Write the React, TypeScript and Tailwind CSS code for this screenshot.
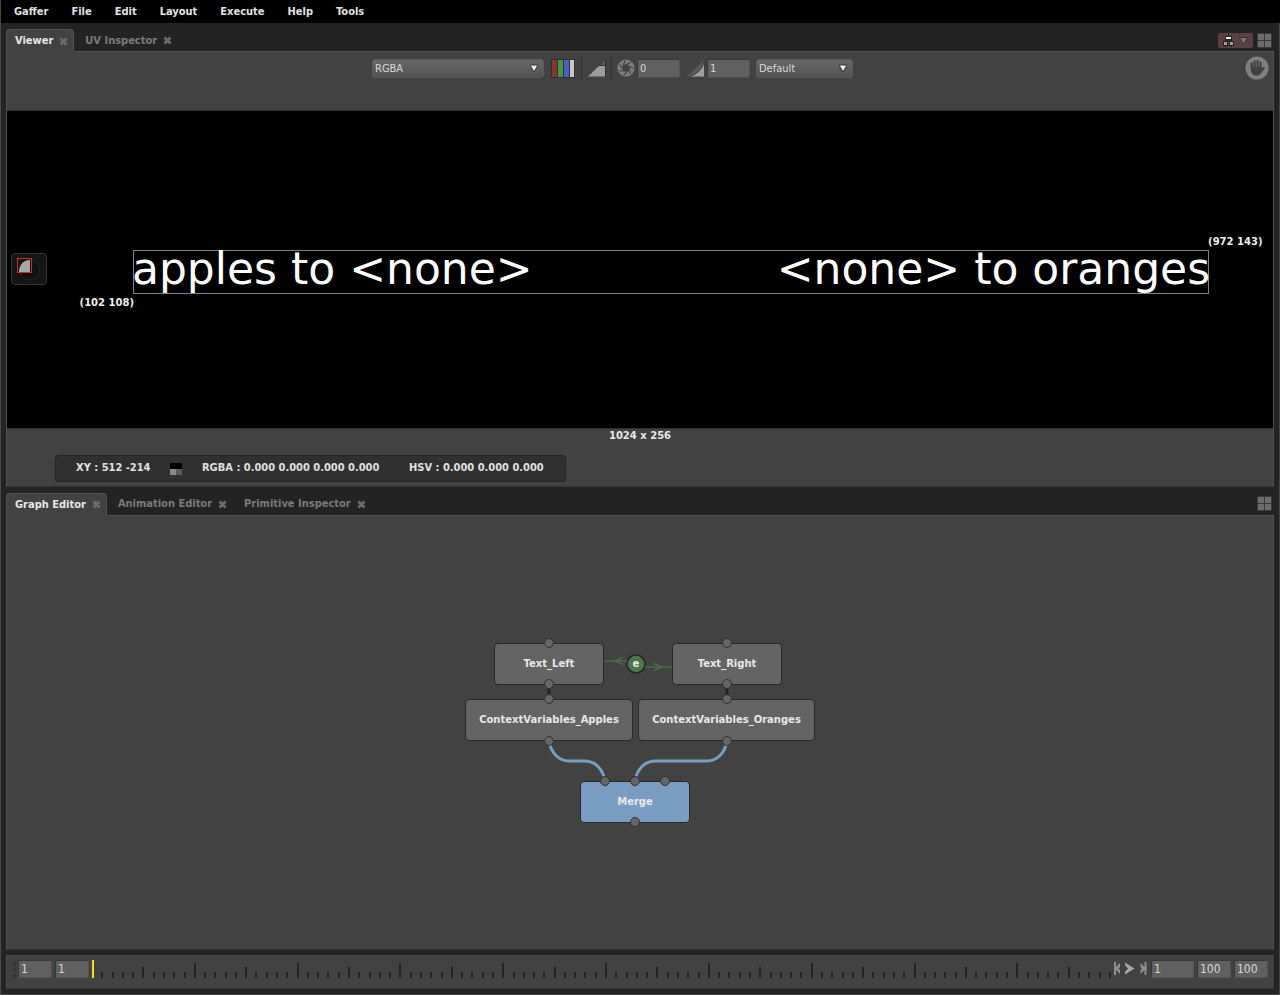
import React from 'react';

const MENUS = ['Gaffer', 'File', 'Edit', 'Layout', 'Execute', 'Help', 'Tools'];

function CloseIcon() {
  return (
    <svg width="9" height="9" viewBox="0 0 9 9" aria-hidden="true">
      <path d="M1.5 1.5 7.5 7.5M7.5 1.5 1.5 7.5" stroke="#6c6c6c" strokeWidth="2.8" />
    </svg>
  );
}

function GridIcon() {
  return (
    <svg width="15" height="15" viewBox="0 0 15 15" aria-hidden="true">
      <rect width="15" height="15" rx="1" fill="#3a3a3a" />
      <path d="M1 1h6v6H1zM8 1h6v6H8zM1 8h6v6H1zM8 8h6v6H8z" fill="#6c6c6c" />
    </svg>
  );
}

function NodeSetIcon() {
  return (
    <svg width="35" height="15" viewBox="0 0 35 15" aria-hidden="true">
      <rect width="35" height="15" rx="2" fill="#5c3f43" />
      <path d="M10.5 1v7M7.5 14V7.500h6V14" stroke="#252525" fill="none" />
      <rect x="7" y="3" width="7" height="4" fill="#222" />
      <rect x="8" y="4" width="5" height="2" fill="#f2f2f2" />
      <rect x="5" y="8" width="5" height="5" fill="#222" />
      <rect x="11" y="8" width="5" height="5" fill="#222" />
      <rect x="6" y="9" width="3" height="3" fill="#a2a2a2" />
      <rect x="12" y="9" width="3" height="3" fill="#a2a2a2" />
      <path d="M21.500 4.500h8l-4 7z" fill="#777" stroke="#3c2c2e" />
    </svg>
  );
}

function HandIcon() {
  return (
    <svg width="24" height="24" viewBox="0 0 24 24" aria-hidden="true">
      <circle cx="12" cy="12" r="11.500" fill="#808080" />
      <path
        d="M6.700 12V7.300M9.600 12V5.400M12.600 12V5M15.500 12V6.500M16 15.500l2.700-3.500"
        fill="none"
        stroke="#414141"
        strokeWidth="2.200"
        strokeLinecap="round"
      />
      <path d="M5.600 11h11v3l1.500-1-2.500 4.500c-.8 1.200-1.200 1.800-2.600 2H9c-2.200-1.500-3.400-4.500-3.400-8.500z" fill="#414141" />
    </svg>
  );
}

function ChannelsIcon() {
  return (
    <svg width="24" height="19" viewBox="0 0 24 19" aria-hidden="true">
      <rect width="24" height="19" fill="#303030" />
      <rect x="1" y="1" width="5" height="17" fill="#843633" />
      <rect x="7" y="1" width="5" height="17" fill="#459843" />
      <rect x="13" y="1" width="5" height="17" fill="#4b60c0" />
      <rect x="19" y="1" width="4" height="17" fill="#c9c9cb" />
    </svg>
  );
}

function ClippingIcon() {
  return (
    <svg width="18" height="18" viewBox="0 0 18 18" aria-hidden="true">
      <path d="M0 17.500 11 7h6.500v10.500z" fill="#9c9c9c" />
      <path d="M12 6.500 17.500 1v5.500z" fill="#5b5b5b" />
      <path d="M17.500 0v18M11 6.500h6" stroke="#303030" />
    </svg>
  );
}

function ExposureIcon() {
  const blades = [0, 51.4, 102.8, 154.3, 205.7, 257.1, 308.6];
  return (
    <svg width="18" height="18" viewBox="0 0 18 18" aria-hidden="true">
      <circle cx="9" cy="9" r="5.800" fill="none" stroke="#7d7d7d" strokeWidth="5.600" />
      {blades.map((a) => (
        <path key={a} d="M7 6.500 14 3.500" stroke="#3b3b3b" strokeWidth="1" transform={`rotate(${a} 9 9)`} />
      ))}
    </svg>
  );
}

function GammaIcon() {
  return (
    <svg width="18" height="18" viewBox="0 0 18 18" aria-hidden="true">
      <path d="M0 17.500 17 1v16.500z" fill="#5b5b5b" />
      <path d="M2 17.500C9.500 16 15.500 10 17 3v14.500z" fill="#9f9f9f" />
      <path d="M2 17.500C9.500 16 15.500 10 17 3" fill="none" stroke="#383838" />
    </svg>
  );
}

function DropDown({ label, value, width }: { label: string; value: string; width: string }) {
  return (
    <div className={`relative ${width}`}>
      <select
        aria-label={label}
        defaultValue={value}
        className="block h-[19px] w-full appearance-none rounded-[3px] border border-[#5b5b5b] bg-linear-to-b from-[#696969] to-[#515151] pt-px pl-[2px] text-[11px] leading-4 text-[#d8d8d8]"
      >
        <option>{value}</option>
      </select>
      <svg className="pointer-events-none absolute top-[5px] right-[5px]" width="10" height="9" viewBox="0 0 10 9" aria-hidden="true">
        <path d="M1 1h8L5 8z" fill="#eee" stroke="#333" />
      </svg>
    </div>
  );
}

function Field({ label, value, className }: { label: string; value: string; className: string }) {
  return (
    <input
      aria-label={label}
      defaultValue={value}
      className={`min-w-0 rounded-[2px] border border-t-[#373737] border-r-[#525252] border-b-[#525252] border-l-[#373737] bg-[#606060] text-[#d8d8d8] outline-none ${className}`}
    />
  );
}

function TabStrip({ tabs, children }: { tabs: string[]; children: React.ReactNode }) {
  return (
    <div className="flex h-[22px] items-stretch">
      <div role="tablist" className="flex">
        {tabs.map((t, i) => (
          <div
            key={t}
            className={
              i === 0
                ? 'relative z-10 -mb-px flex items-center gap-[6px] rounded-t-[4px] border border-b-0 border-[#505050] bg-[#424242] pr-[5px] pl-2'
                : 'flex items-center gap-[6px] pt-px pr-[6px] pl-[11px]'
            }
          >
            <button
              role="tab"
              aria-selected={i === 0}
              className={i === 0 ? 'text-[11px] leading-4 font-bold text-[#e6e6e6]' : 'text-[11px] leading-4 font-bold text-[#7b7b7b]'}
            >
              {t}
            </button>
            <button aria-label={`Close ${t}`}>
              <CloseIcon />
            </button>
          </div>
        ))}
      </div>
      <div className="ml-auto flex items-center gap-1 pr-[2px]">{children}</div>
    </div>
  );
}

function Viewer() {
  return (
    <section className="flex flex-col">
      <TabStrip tabs={['Viewer', 'UV Inspector']}>
        <button aria-label="Node set">
          <NodeSetIcon />
        </button>
        <button aria-label="Viewer layout">
          <GridIcon />
        </button>
      </TabStrip>
      <div className="border border-[#4f4f4f] border-b-[#343434] bg-[#424242]">
        <div className="flex h-[59px] items-start border-b border-[#303030] pt-[4px]">
          <div className="flex h-6 flex-1 items-center justify-center">
            <DropDown label="Channels" value="RGBA" width="w-[172px]" />
            <button aria-label="Solo channel" className="ml-[7px]">
              <ChannelsIcon />
            </button>
            <div className="mx-[6px] h-6 w-px bg-[#343434]" />
            <button aria-label="Clipping">
              <ClippingIcon />
            </button>
            <div className="mx-[5px] h-6 w-px bg-[#343434]" />
            <button aria-label="Reset exposure">
              <ExposureIcon />
            </button>
            <Field label="Exposure" value="0" className="ml-[2px] h-[19px] w-[43px] pl-[2px] text-[11px]" />
            <button aria-label="Reset gamma" className="ml-[7px]">
              <GammaIcon />
            </button>
            <Field label="Gamma" value="1" className="ml-[2px] h-[19px] w-[43px] pl-[2px] text-[11px]" />
            <div className="ml-[6px]">
              <DropDown label="Display transform" value="Default" width="w-[97px]" />
            </div>
          </div>
          <button aria-label="Pan" className="mr-1 ml-[27px]">
            <HandIcon />
          </button>
        </div>
        <div className="relative flex aspect-[4/1] items-center bg-black">
          <button
            aria-label="Crop window tool"
            className="relative ml-1 flex h-8 w-9 items-center justify-center rounded-[4px] border border-[#363636] bg-[#151515]"
          >
            <svg width="26" height="26" viewBox="0 0 26 26" aria-hidden="true">
              <circle cx="14" cy="14" r="10" fill="#111" stroke="#262626" />
              <path d="M3 16C3 9 7 4 14 4v12z" fill="#a8a8a8" />
            </svg>
            <span className="absolute top-1 left-[5px] size-[15px] border border-[#d62828]" />
          </button>
          <div className="absolute top-[44%] right-[5.05%] left-[9.95%] flex h-11 items-center justify-between border border-[#808080] pb-[6px] font-[DejaVu_Sans] text-[44px] leading-none whitespace-nowrap text-white">
            <span className="-ml-[2px]">apples to &lt;none&gt;</span>
            <span className="-mr-[2px]">&lt;none&gt; to oranges</span>
            <span className="absolute top-[46px] right-full text-[10px] leading-3 font-bold text-[#eee]">(102 108)</span>
            <span className="absolute bottom-[45px] left-full text-[10px] leading-3 font-bold text-[#eee]">(972 143)</span>
          </div>
        </div>
        <div className="h-[58px] border-t border-[#303030]">
          <div className="pt-px text-center font-[DejaVu_Sans] text-[10px] leading-3 font-bold text-[#e8e8e8]">1024 x 256</div>
          <div className="mt-[13px] ml-12 flex h-[27px] w-[511px] items-center rounded-[3px] border border-[#242424] bg-[#303030] pt-px pl-5 text-[11px] font-bold text-[#e0e0e0]">
            <span className="w-[94px]">XY : 512 -214</span>
            <svg width="12" height="12" viewBox="0 0 12 12" aria-hidden="true">
              <rect width="12" height="6" />
              <rect y="6" width="6" height="6" fill="#888" />
              <rect x="6" y="6" width="6" height="6" fill="#5c5c5c" />
            </svg>
            <span className="ml-5 w-[207px]">RGBA : 0.000 0.000 0.000 0.000</span>
            <span>HSV : 0.000 0.000 0.000</span>
          </div>
        </div>
      </div>
    </section>
  );
}

const NODES = [
  { name: 'Text_Left', pos: 'left-[29px] top-[5px] w-[110px] bg-[#646464]' },
  { name: 'Text_Right', pos: 'left-[207px] top-[5px] w-[110px] bg-[#646464]' },
  { name: 'ContextVariables_Apples', pos: 'left-0 top-[61px] w-[168px] bg-[#646464]' },
  { name: 'ContextVariables_Oranges', pos: 'left-[173px] top-[61px] w-[177px] bg-[#646464]' },
  { name: 'Merge', pos: 'left-[115px] top-[143px] w-[110px] bg-[#799dc0]' },
];

const PLUGS = [
  [84, 5], [262, 5], [84, 46], [262, 46], [84, 61], [262, 61],
  [84, 103], [262, 103], [140, 143], [170, 143], [200, 143], [170, 184],
];

function Graph() {
  return (
    <div className="relative mt-px h-[190px] w-[350px] font-[DejaVu_Sans]">
      <svg className="absolute inset-0" width="350" height="190" viewBox="0 0 350 190" aria-hidden="true">
        <path d="M84 46v15M262 46v15" stroke="#222" strokeWidth="3" />
        <path d="M84 103c2 12 10 20 20 20h16c10 0 18 8 20 20M262 103c-2 12-10 20-20 20h-52c-10 0-18 8-20 20" fill="none" stroke="#799dc0" strokeWidth="3" />
        <path d="M139 23h25M158 19.500l-8 3.500 8 3.500M178 29h29M189 25.500l8 3.500-8 3.500" fill="none" stroke="#496b49" strokeWidth="1.500" />
        <circle cx="171" cy="26" r="9" fill="#4d754d" stroke="#252525" strokeWidth="1.500" />
      </svg>
      {NODES.map((n) => (
        <button
          key={n.name}
          className={`absolute flex h-[42px] items-center justify-center rounded-[4px] border border-[#282828] pb-px text-[10px] font-bold whitespace-nowrap text-[#e8e8e8] ${n.pos}`}
        >
          {n.name}
        </button>
      ))}
      <span className="absolute top-[18px] left-[162px] w-[18px] text-center text-[10px] leading-4 font-bold text-[#e8e8e8]">e</span>
      <svg className="pointer-events-none absolute inset-0" width="350" height="190" viewBox="0 0 350 190" aria-hidden="true">
        {PLUGS.map(([x, y]) => (
          <circle key={`${x}-${y}`} cx={x} cy={y} r="4.500" fill="#666" stroke="#303030" strokeWidth="1" />
        ))}
      </svg>
    </div>
  );
}

function Timeline() {
  const frames = Array.from({ length: 99 }, (_, i) => i + 1);
  return (
    <footer className="flex h-[34px] items-start border border-t-[#484848] border-r-[#3a3a3a] border-b-[#343434] border-l-[#4b4b4b] bg-[#424242] pt-[4px] pr-[5px] pl-[5px] text-[12px]">
      <svg className="mt-px mr-px" width="5" height="17" viewBox="0 0 5 17" aria-hidden="true">
        <circle cx="2.500" cy="2.500" r="2" fill="#363636" />
        <circle cx="2.500" cy="8.500" r="2" fill="#363636" />
        <circle cx="2.500" cy="14.500" r="2" fill="#363636" />
      </svg>
      <Field label="Start frame" value="1" className="h-[18px] w-[34px] pl-[2px]" />
      <Field label="Range start" value="1" className="ml-[3px] h-[18px] w-[34px] pl-[2px]" />
      <svg className="ml-[3px] h-[18px] min-w-0 flex-1" role="img" aria-label="Timeline">
        <rect x="0" y="0" width="2" height="18" fill="#f5dc2d" />
        {frames.map((f) => {
          const h = f % 10 === 0 ? 15 : f % 5 === 0 ? 11 : 6;
          return <rect key={f} x={`${f * 1.008 - 0.1}%`} y={18 - h} width="2" height={h} fill="#232323" shapeRendering="crispEdges" />;
        })}
      </svg>
      <svg className="mt-px mr-[3px]" width="36" height="15" viewBox="0 0 36 15" aria-hidden="true">
        <path d="M2 1h2v5l4-4v4L6.500 7.500 8 9v4L4 9v5H2z" fill="#8e8e8e" />
        <path d="M13 1.500l9.500 6-9.500 6V11l3-3.500-3-3.500z" fill="#a6a6a6" />
        <path d="M34.500 1h-2v5l-4-4v4L30 7.500 28.500 9v4l4-4v5h2z" fill="#8e8e8e" />
      </svg>
      <Field label="Current frame" value="1" className="h-[18px] w-[43px] pl-[2px]" />
      <Field label="Range end" value="100" className="ml-[3px] h-[18px] w-[34px] pl-[2px]" />
      <Field label="End frame" value="100" className="ml-[3px] h-[18px] w-[34px] pl-[2px]" />
    </footer>
  );
}

export default function App() {
  return (
    <div className="flex min-h-screen flex-col border-l border-[#4a4a4a] bg-[#232323] font-['DejaVu_Sans_Condensed','DejaVu_Sans',sans-serif]">
      <nav className="flex h-[23px] items-center gap-px bg-black pl-[2px]">
        {MENUS.map((m) => (
          <button key={m} className="px-[11px] text-[11px] leading-4 font-bold text-[#e2e2e2]">
            {m}
          </button>
        ))}
      </nav>
      <div className="flex flex-1 flex-col border-r border-b border-[#454545] pt-[6px] pr-[5px] pb-[5px] pl-[5px]">
        <Viewer />
        <section className="mt-[6px] flex flex-1 flex-col">
          <TabStrip tabs={['Graph Editor', 'Animation Editor', 'Primitive Inspector']}>
            <button aria-label="Graph editor layout">
              <GridIcon />
            </button>
          </TabStrip>
          <div className="flex flex-1 items-center justify-center border border-[#4f4f4f] border-b-[#343434] bg-[#424242]">
            <Graph />
          </div>
        </section>
        <div className="mt-[5px]">
          <Timeline />
        </div>
      </div>
    </div>
  );
}
